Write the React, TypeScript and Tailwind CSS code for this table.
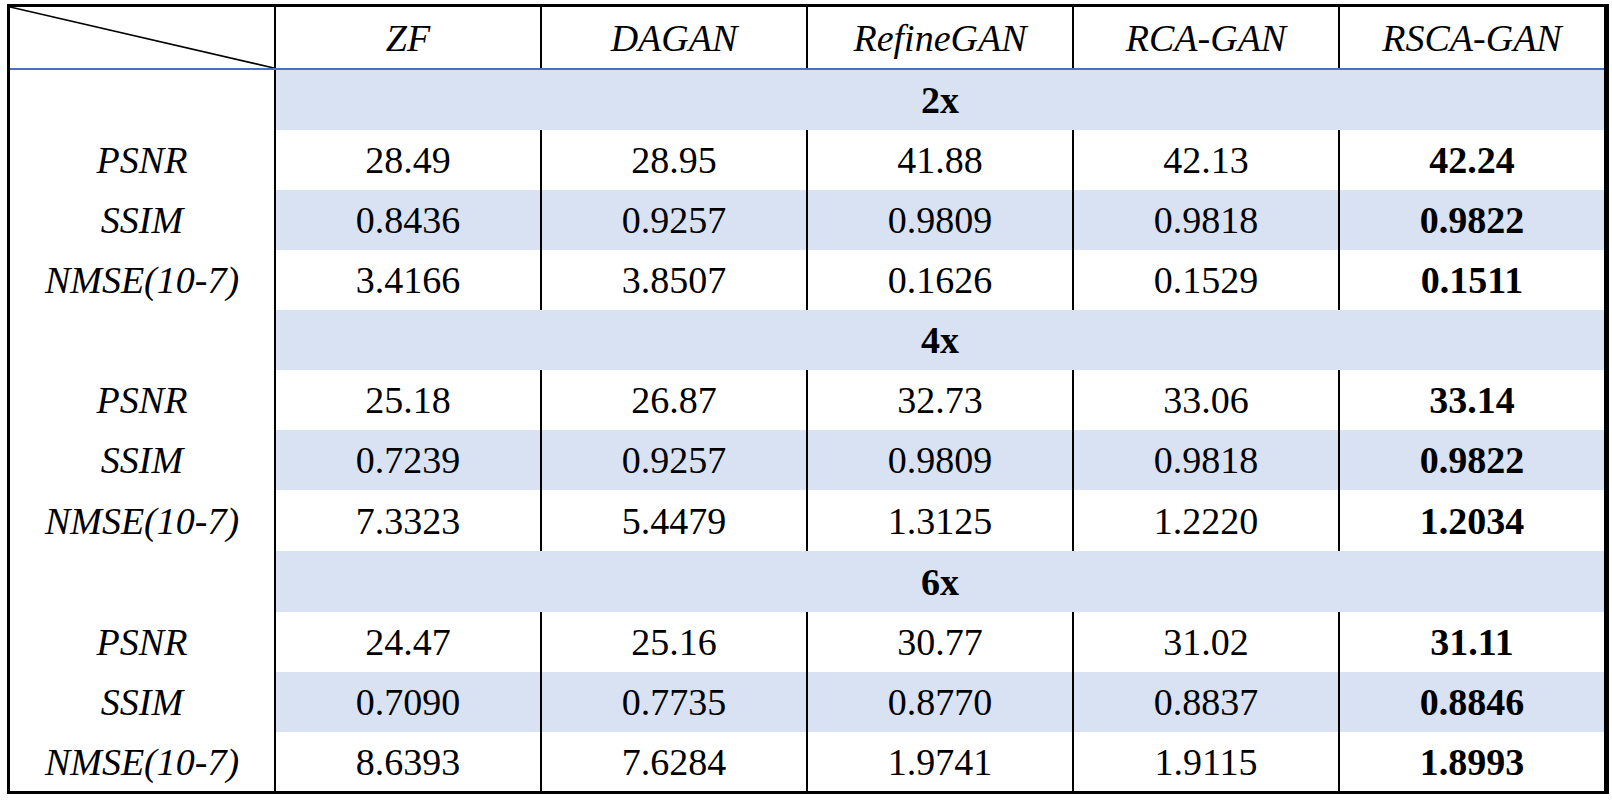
import React from "react";

const headers = ["ZF", "DAGAN", "RefineGAN", "RCA-GAN", "RSCA-GAN"];

type Row =
  | { kind: "section"; label: string; h: string }
  | { kind: "data"; label: string; values: string[]; shaded: boolean; h: string };

const rows: Row[] = [
  { kind: "section", label: "2x", h: "h-[60px]" },
  { kind: "data", label: "PSNR", values: ["28.49", "28.95", "41.88", "42.13", "42.24"], shaded: false, h: "h-[60px]" },
  { kind: "data", label: "SSIM", values: ["0.8436", "0.9257", "0.9809", "0.9818", "0.9822"], shaded: true, h: "h-[60px]" },
  { kind: "data", label: "NMSE(10-7)", values: ["3.4166", "3.8507", "0.1626", "0.1529", "0.1511"], shaded: false, h: "h-[60px]" },
  { kind: "section", label: "4x", h: "h-[60px]" },
  { kind: "data", label: "PSNR", values: ["25.18", "26.87", "32.73", "33.06", "33.14"], shaded: false, h: "h-[60px]" },
  { kind: "data", label: "SSIM", values: ["0.7239", "0.9257", "0.9809", "0.9818", "0.9822"], shaded: true, h: "h-[60px]" },
  { kind: "data", label: "NMSE(10-7)", values: ["7.3323", "5.4479", "1.3125", "1.2220", "1.2034"], shaded: false, h: "h-[61px]" },
  { kind: "section", label: "6x", h: "h-[61px]" },
  { kind: "data", label: "PSNR", values: ["24.47", "25.16", "30.77", "31.02", "31.11"], shaded: false, h: "h-[60px]" },
  { kind: "data", label: "SSIM", values: ["0.7090", "0.7735", "0.8770", "0.8837", "0.8846"], shaded: true, h: "h-[60px]" },
  { kind: "data", label: "NMSE(10-7)", values: ["8.6393", "7.6284", "1.9741", "1.9115", "1.8993"], shaded: false, h: "h-[59px]" },
];

export default function App() {
  return (
    <div className="w-[1612px] h-[802px] bg-white pl-[7px] pt-[4px] [font-family:'Liberation_Serif','Times_New_Roman',serif] text-black text-[38px] leading-none">
      <div className="w-[1602px] border-l-[3px] border-t-[3px] border-r-[5px] border-b-[3px] border-black flex flex-col">
        {/* header */}
        <div className="flex h-[63px] border-b-2 border-[#4472C4]">
          <div className="relative w-[264px] h-full">
            <svg className="absolute inset-0" width="264" height="61" viewBox="0 0 264 61">
              <line x1="0" y1="0" x2="264" y2="61" stroke="#000" strokeWidth="1.6" />
            </svg>
          </div>
          {headers.map((h) => (
            <div key={h} className="w-[266px] border-l-2 border-black flex items-center justify-center italic">
              {h}
            </div>
          ))}
        </div>
        {rows.map((r, i) =>
          r.kind === "section" ? (
            <div key={i} className={`flex ${r.h}`}>
              <div className="w-[264px]" />
              <div className="w-[1330px] border-l-2 border-black bg-[#D9E2F3] flex items-center justify-center font-bold">
                {r.label}
              </div>
            </div>
          ) : (
            <div key={i} className={`flex ${r.h}`}>
              <div className="w-[264px] flex items-center justify-center italic">{r.label}</div>
              {r.values.map((v, j) => (
                <div
                  key={j}
                  className={`w-[266px] border-l-2 border-black flex items-center justify-center ${
                    r.shaded ? "bg-[#D9E2F3]" : "bg-white"
                  } ${j === 4 ? "font-bold" : ""}`}
                >
                  {v}
                </div>
              ))}
            </div>
          )
        )}
      </div>
    </div>
  );
}
